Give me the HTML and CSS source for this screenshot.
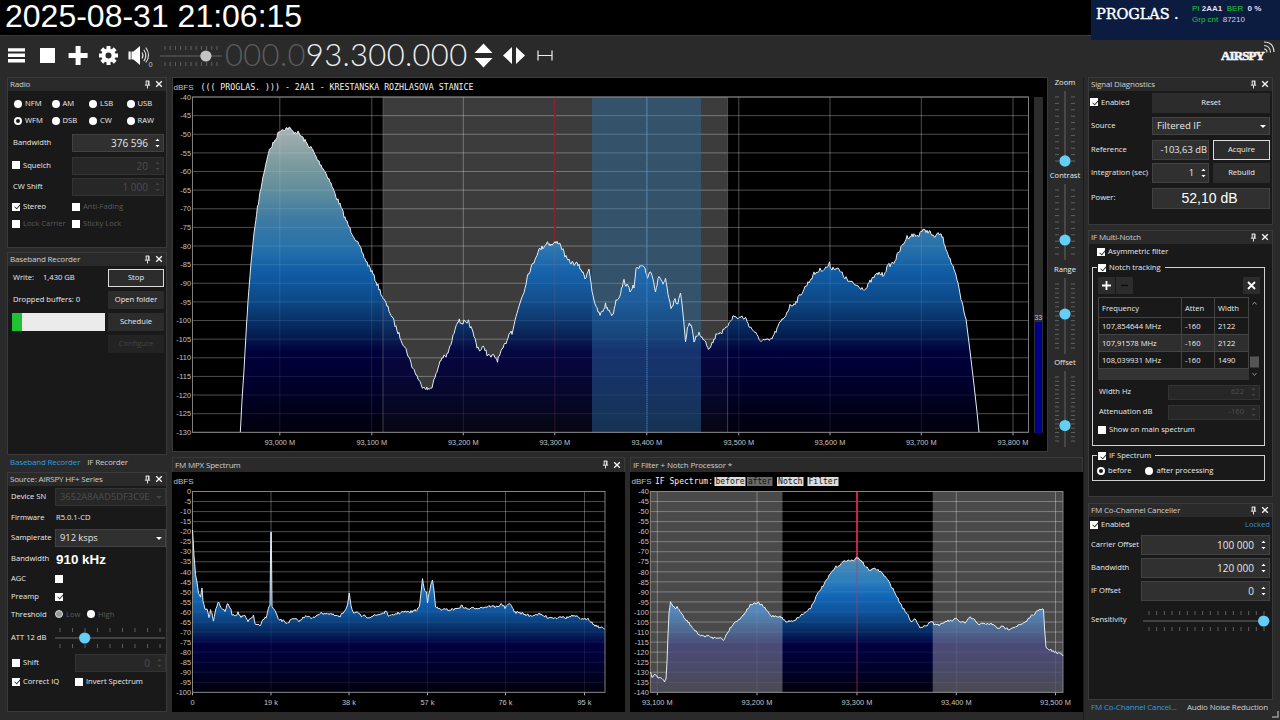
FILE: index.html
```html
<!DOCTYPE html>
<html lang="en">
<head>
    <meta charset="UTF-8">
    <meta name="viewport" content="width=device-width, initial-scale=1.0">
    <title>SDR receiver</title>
    <link rel="stylesheet" href="styles.css">
</head>
<body>
    <!-- shared icons -->
    <svg class="defs" width="0" height="0">
        <symbol id="pin" viewBox="0 0 8 10"><path d="M2 1h4M2.5 1v4.500M5 1v4.500M5.700 1v4.500M1 5.800h6M4 6v3.500" fill="none" stroke="#eee" stroke-width="1.100"/></symbol>
        <symbol id="close" viewBox="0 0 8 8"><path d="M1.200 1.200l5.600 5.600M6.800 1.200l-5.600 5.600" stroke="#f2f2f2" stroke-width="1.400"/></symbol>
        <symbol id="spin" viewBox="0 0 6 12"><path d="M0.500 3.500L3 0.800l2.500 2.700zM0.500 8.500L3 11.200l2.500-2.700z" fill="currentColor"/></symbol>
    </svg>

    <header class="clock">2025-08-31 21:06:15</header>
    <div class="rds">
        <span class="station">PROGLAS .</span>
        <div class="rds-info">
            <p><i>PI</i> <b>2AA1</b> &nbsp;<i>BER</i> &nbsp;<b>0 %</b></p>
            <p><i>Grp cnt</i> &nbsp;<em>87210</em></p>
        </div>
    </div>

    <div class="toolbar">
        <svg class="tools" width="160" height="40" viewBox="0 36 160 40" fill="#fff">
            <path d="M8 48.200h17v3.400H8zM8 53.600h17v3.400H8zM8 59h17v3.400H8z"/>
            <path d="M40 48h15v15H40z"/>
            <path d="M75.600 46h5v7h7v5h-7v7h-5v-7h-7v-5h7z"/>
            <g transform="translate(108.500 55.500)">
                <circle r="5" fill="none" stroke="#fff" stroke-width="4"/>
                <path id="tooth" d="M-2-9.500h4v4h-4z"/>
                <use href="#tooth" transform="rotate(45)"/><use href="#tooth" transform="rotate(90)"/>
                <use href="#tooth" transform="rotate(135)"/><use href="#tooth" transform="rotate(180)"/>
                <use href="#tooth" transform="rotate(225)"/><use href="#tooth" transform="rotate(270)"/>
                <use href="#tooth" transform="rotate(315)"/>
            </g>
            <path d="M128.500 51.500h2.200v8h-2.200zM131.500 51.500h2L140 46v19l-6.500-5.500h-2z"/>
            <path d="M142 52.500q2 3 0 6M143.800 49.800q4 5.700 0 11.400M145.800 47.500q5.500 8 0 15" fill="none" stroke="#ddd" stroke-width="1.100"/>
            <text x="148.500" y="66.500" font-size="7">0</text>
        </svg>
        <svg class="slider" data-dir="h" data-size="62x26" data-ticks="11" data-pos="0.740" data-knob="#c4c4c4" data-pad="5"></svg>
        <div class="freq">
            <span class="off">000<s>.</s>0</span>93<s>.</s>300<s>.</s>000
        </div>
        <svg class="steps" width="90" height="40" viewBox="470 36 90 40" fill="#fff">
            <path d="M483.500 43.500l9 9.500h-18zM483.500 67.500l9-9.500h-18z"/>
            <path d="M503 55.500l9-8.500v17zM525 55.500l-9-8.500v17z"/>
            <path d="M538 50.500v10M552 50.500v10M538 55.500h14" stroke="#eee" stroke-width="1.200"/>
        </svg>
        <div class="logo">
            <span>AIRSPY</span>
            <svg width="12" height="12" viewBox="0 0 12 12" fill="none" stroke="#ddd" stroke-width="1.200"><path d="M1 8q3 0 3 3.500M1 4.500q6 0 6.500 7M1 1q9.500 0 10 10"/></svg>
        </div>
    </div>

    <main>
        <aside class="left">
            <section class="panel radio">
                <h2>Radio<svg class="pin"><use href="#pin"/></svg><svg class="close"><use href="#close"/></svg></h2>
                <div class="body">
                    <div class="modes"><label><i class="rd"></i>NFM</label><label><i class="rd"></i>AM</label><label><i class="rd"></i>LSB</label><label><i class="rd"></i>USB</label></div>
                    <div class="modes"><label><i class="rd on"></i>WFM</label><label><i class="rd"></i>DSB</label><label><i class="rd"></i>CW</label><label><i class="rd"></i>RAW</label></div>
                    <div class="row first"><span>Bandwidth</span><div class="field">376 596<svg><use href="#spin"/></svg></div></div>
                    <div class="row"><label><i class="ck"></i>Squelch</label><div class="field dis">20<svg><use href="#spin"/></svg></div></div>
                    <div class="row"><span>CW Shift</span><div class="field dis">1 000<svg><use href="#spin"/></svg></div></div>
                    <div class="pair"><label><i class="ck on"></i>Stereo</label><label class="dim"><i class="ck"></i>Anti-Fading</label></div>
                    <div class="pair"><label class="dim"><i class="ck"></i>Lock Carrier</label><label class="dim"><i class="ck"></i>Sticky Lock</label></div>
                </div>
            </section>

            <section class="panel recorder">
                <h2>Baseband Recorder<svg class="pin"><use href="#pin"/></svg><svg class="close"><use href="#close"/></svg></h2>
                <div class="body">
                    <div class="row"><span class="w">Write:</span><span>1,430 GB</span><button class="focus">Stop</button></div>
                    <div class="row"><span>Dropped buffers: 0</span><button>Open folder</button></div>
                    <div class="row"><div class="progress"><div></div></div><button>Schedule</button></div>
                    <div class="row"><button class="off">Configure</button></div>
                </div>
            </section>
            <nav class="tabs"><a class="active">Baseband Recorder</a><a>IF Recorder</a></nav>

            <section class="panel source">
                <h2>Source: AIRSPY HF+ Series<svg class="pin"><use href="#pin"/></svg><svg class="close"><use href="#close"/></svg></h2>
                <div class="body">
                    <div class="row"><span>Device SN</span><div class="combo dis">3652A8AAD5DF3C9E<b></b></div></div>
                    <div class="row"><span>Firmware</span><span class="fw">R5.0.1-CD</span></div>
                    <div class="row"><span>Samplerate</span><div class="combo">912 ksps<b></b></div></div>
                    <div class="row"><span>Bandwidth</span><strong>910 kHz</strong></div>
                    <div class="row"><span>AGC</span><i class="ck"></i></div>
                    <div class="row"><span>Preamp</span><i class="ck on"></i></div>
                    <div class="row"><span>Threshold</span><label class="dim low"><i class="rd half"></i>Low</label><label class="dim"><i class="rd"></i>High</label></div>
                    <div class="row"><span>ATT 12 dB</span><svg class="slider" data-dir="h" data-size="110x24" data-ticks="9" data-pos="0.270" data-knob="#63cff6" data-pad="5"></svg></div>
                    <div class="row shift"><label><i class="ck"></i>Shift</label><div class="field dis">0<svg><use href="#spin"/></svg></div></div>
                    <div class="row shift"><label><i class="ck on"></i>Correct IQ</label><label><i class="ck"></i>Invert Spectrum</label></div>
                </div>
            </section>
        </aside>

        <div class="center">
            <div class="upper">
                <svg id="main-chart" width="876" height="375" viewBox="172 77 876 375"></svg>
                <div class="vsliders">
                    <span>Zoom</span><svg class="slider" data-dir="v" data-size="26x76" data-ticks="11" data-pos="0.920" data-knob="#63cff6" data-pad="6"></svg>
                    <span>Contrast</span><svg class="slider" data-dir="v" data-size="26x76" data-ticks="11" data-pos="0.737" data-knob="#63cff6" data-pad="6"></svg>
                    <span>Range</span><svg class="slider" data-dir="v" data-size="26x76" data-ticks="15" data-pos="0.474" data-knob="#63cff6" data-pad="6"></svg>
                    <span>Offset</span><svg class="slider" data-dir="v" data-size="26x76" data-ticks="16" data-pos="0.717" data-knob="#63cff6" data-pad="6"></svg>
                </div>
            </div>
            <div class="lower">
                <section class="panel">
                    <h2>FM MPX Spectrum<svg class="pin"><use href="#pin"/></svg><svg class="close"><use href="#close"/></svg></h2>
                    <svg id="mpx-chart" width="453" height="240" viewBox="172 472 453 240"></svg>
                </section>
                <section class="panel">
                    <h2>IF Filter + Notch Processor *</h2>
                    <svg id="if-chart" width="453" height="240" viewBox="630 472 453 240"></svg>
                </section>
            </div>
        </div>

        <aside class="right">
            <section class="panel diag">
                <h2>Signal Diagnostics<svg class="pin"><use href="#pin"/></svg><svg class="close"><use href="#close"/></svg></h2>
                <div class="body">
                    <div class="row"><label><i class="ck on"></i>Enabled</label><button class="wide">Reset</button></div>
                    <div class="row"><span>Source</span><div class="combo">Filtered IF<b></b></div></div>
                    <div class="row"><span>Reference</span><div class="field half">-103,63 dB</div><button class="focus">Acquire</button></div>
                    <div class="row"><span>Integration (sec)</span><div class="field half num">1<svg><use href="#spin"/></svg></div><button>Rebuild</button></div>
                    <div class="row"><span>Power:</span><div class="power">52,10 dB</div></div>
                </div>
            </section>

            <section class="panel notch">
                <h2>IF Multi-Notch<svg class="pin"><use href="#pin"/></svg><svg class="close"><use href="#close"/></svg></h2>
                <div class="body">
                    <label class="asym"><i class="ck on"></i>Asymmetric filter</label>
                    <div class="group tracking">
                        <label class="legend"><i class="ck on"></i>Notch tracking</label>
                        <div class="buttons">
                            <svg width="17" height="17"><path d="M4 8.500h9M8.500 4v9" stroke="#fff" stroke-width="1.800"/></svg>
                            <svg width="17" height="17"><path d="M5 8.500h7" stroke="#111" stroke-width="1.500"/></svg>
                            <svg width="17" height="17"><path d="M5 5l7 7M12 5l-7 7" stroke="#fff" stroke-width="1.800"/></svg>
                        </div>
                        <div class="list">
                            <table>
                                <tr><th>Frequency</th><th>Atten</th><th>Width</th></tr>
                                <tr><td>107,854644 MHz</td><td>-160</td><td>2122</td></tr>
                                <tr class="alt"><td>107,91578 MHz</td><td>-160</td><td>2122</td></tr>
                                <tr><td>108,039931 MHz</td><td>-160</td><td>1490</td></tr>
                            </table>
                            <svg width="11" height="82" fill="none" stroke="#888" stroke-width="1"><path d="M3.500 7.500l2-2.500 2 2.500M3.500 76l2 2.500 2-2.500"/><path d="M1 59.500h9v11H1z" fill="#555" stroke="none"/></svg>
                        </div>
                        <div class="row"><span>Width Hz</span><div class="field dis small">622<svg><use href="#spin"/></svg></div></div>
                        <div class="row"><span>Attenuation dB</span><div class="field dis small">-160<svg><use href="#spin"/></svg></div></div>
                        <label class="show"><i class="ck"></i>Show on main spectrum</label>
                    </div>
                    <div class="group ifs">
                        <label class="legend"><i class="ck on"></i>IF Spectrum</label>
                        <div class="radios"><label><i class="rd on"></i>before</label><label><i class="rd"></i>after processing</label></div>
                    </div>
                </div>
            </section>

            <section class="panel cancel">
                <h2>FM Co-Channel Canceller<svg class="pin"><use href="#pin"/></svg><svg class="close"><use href="#close"/></svg></h2>
                <div class="body">
                    <div class="row"><label><i class="ck on"></i>Enabled</label><span class="locked">Locked</span></div>
                    <div class="row"><span>Carrier Offset</span><div class="field">100 000<svg><use href="#spin"/></svg></div></div>
                    <div class="row"><span>Bandwidth</span><div class="field">120 000<svg><use href="#spin"/></svg></div></div>
                    <div class="row"><span>IF Offset</span><div class="field">0<svg><use href="#spin"/></svg></div></div>
                    <div class="row"><span>Sensitivity</span><svg class="slider" data-dir="h" data-size="127x24" data-ticks="16" data-pos="0.950" data-knob="#63cff6" data-pad="6"></svg></div>
                </div>
            </section>
            <nav class="tabs"><a class="active">FM Co-Channel Cancel...</a><a>Audio Noise Reduction</a></nav>
            <svg class="grip" width="7" height="7"><path d="M6 0v6H0" fill="none" stroke="#999" stroke-width="1.500"/></svg>
        </aside>
    </main>
    <script src="charts.js"></script>
</body>
</html>
```

FILE: styles.css
```css
* {
    box-sizing: border-box;
    margin: 0;
    padding: 0;
}

body {
    width: 1280px;
    height: 720px;
    overflow: hidden;
    background: #2a2a2a;
    color: #ececec;
    font-family: "Open Sans", "Noto Sans", sans-serif;
    font-size: 7.6px;
    font-weight: 500;
    line-height: 1.2;
    white-space: nowrap;
}

svg {
    display: block;
    flex: none;
}

.defs {
    position: absolute;
}

.clock {
    height: 35px;
    padding-left: 5px;
    background: #000;
    color: #fff;
    font: 32px/32px "Liberation Sans", Arial, sans-serif;
}

/* station info lying over the top right corner */
.rds {
    position: absolute;
    top: 0;
    right: 0;
    width: 189px;
    height: 40px;
    display: flex;
    background: #0b1c40;
    padding-left: 5px;
}
.station {
    width: 96px;
    color: #fff;
    font: 14.5px/29px "DejaVu Serif", serif;
    letter-spacing: -0.1px;
    -webkit-text-stroke: 0.4px #fff;
}
.rds-info {
    padding-top: 3px;
    font: 8px/11px "Liberation Sans", Arial, sans-serif;
    color: #d9c8f0;
}
.rds-info i {
    font-style: normal;
    color: #22c53c;
}
.rds-info b {
    color: #e8dcf8;
}
.rds-info em {
    font-style: normal;
}

.toolbar {
    height: 42px;
    display: flex;
    align-items: center;
    border-top: 1px solid #383838;
    padding-bottom: 2px;
}
.freq {
    width: 243px;
    margin-left: 3px;
    display: flex;
    font: 300 31px/36px Lato, sans-serif;
    letter-spacing: 0.33px;
    padding-bottom: 3px;
    color: #f0f0f0;
}
.freq s {
    text-decoration: none;
}
.freq .off {
    display: flex;
    color: #5c5c5c;
}
.steps {
    margin-left: 2px;
}
.logo {
    display: flex;
    margin-left: auto;
    margin-right: 5px;
    color: #f4f4f4;
    font: bold 13px/13px "Liberation Serif", serif;
    letter-spacing: -0.9px;
    -webkit-text-stroke: 0.6px #f4f4f4;
}
.logo svg {
    margin: -8px 0 0 -3px;
}
.logo span {
    width: 45px;
}

main {
    display: flex;
    height: 643px;
}
.left {
    width: 172px;
    padding-left: 7px;
}
.center {
    width: 911px;
}
.right {
    position: relative;
    width: 197px;
    padding-left: 4px;
    border-left: 1px solid #1b1b1b;
}

.panel {
    border: 1px solid #3a3a3a;
    background: #191919;
}
.left .panel {
    width: 160px;
}
.right .panel {
    width: 185px;
}
.panel h2 {
    height: 13px;
    display: flex;
    align-items: center;
    padding: 0 3px 1px 2px;
    background: #2a2a2a;
    color: #cfcfcf;
    font-size: 8px;
    font-weight: 400;
    letter-spacing: -0.17px;
}
.panel h2 .pin {
    width: 7px;
    height: 9px;
    margin-left: auto;
    margin-right: 4px;
}
.panel h2 .close {
    width: 8px;
    height: 8px;
}

.row,
label {
    display: flex;
    align-items: center;
}
.rd {
    width: 8px;
    height: 8px;
    margin-right: 3px;
    border-radius: 50%;
    background: #fff;
    flex: none;
}
.rd.on {
    border: 2px solid #fff;
    background: #191919;
}
.rd.half {
    background: #999;
    border: 1.5px solid #ddd;
}
.ck {
    width: 8px;
    height: 8px;
    margin-right: 3px;
    background: #fff;
    flex: none;
}
.ck.on::after {
    content: "";
    display: block;
    width: 6px;
    height: 3px;
    margin: 1.5px 0 0 1.5px;
    border-left: 1px solid #222;
    border-bottom: 1px solid #222;
    transform: rotate(-48deg) scale(0.85);
}
.dim {
    color: #5a5a5a;
}

.field,
.combo,
.power {
    display: flex;
    align-items: center;
    justify-content: flex-end;
    height: 18px;
    margin-left: auto;
    padding-right: 3px;
    border: 1px solid #424242;
    background: #303030;
    color: #e6e6e6;
    font-size: 10px;
    font-weight: 400;
}
.field svg {
    width: 5px;
    height: 12px;
    margin-left: 7px;
    color: #fff;
}
.field.dis,
.combo.dis {
    background: #272727;
    border-color: #333;
    color: #4e4e4e;
}
.field.dis svg {
    color: #444;
}
.combo {
    justify-content: flex-start;
    padding-left: 4px;
}
.combo b {
    margin-left: auto;
    border: 3px solid transparent;
    border-top-color: #fff;
    border-bottom-width: 0;
}
.combo.dis b {
    border-top-color: #444;
}
button {
    width: 56px;
    height: 18px;
    margin-left: auto;
    border: 1px solid #2c2c2c;
    background: #2c2c2c;
    color: #ececec;
    font: inherit;
}
button.focus {
    border-color: #dcdcdc;
}
button.off {
    background: #232323;
    border-color: #232323;
    color: #444;
}

/* left column */
.radio {
    height: 171px;
    margin-bottom: 4px;
}
.radio .body {
    padding: 4px 4px 0 5px;
    display: grid;
    grid-template-rows: 17px 17px 26px 21px 22px 17px 17px;
}
.modes {
    display: grid;
    grid-template-columns: repeat(4, 37.5px);
    padding-left: 1px;
}
.radio .first {
    padding-top: 2px;
}
.radio .field {
    width: 92px;
}
.pair {
    display: grid;
    grid-template-columns: 60px 80px;
    margin-left: -1px;
}
.radio .row label {
    margin-left: -1px;
}
.recorder {
    height: 203px;
}
.recorder .body {
    padding-top: 1px;
}
.recorder .row {
    height: 22px;
    padding: 0 2px 0 5px;
}
.recorder .w {
    width: 30px;
}
.progress {
    width: 93px;
    height: 18px;
    margin-left: -1px;
    background: #ebebeb;
}
.progress div {
    width: 10px;
    height: 18px;
    background: #1fc235;
}
.tabs {
    height: 14px;
    display: flex;
    align-items: center;
    padding-bottom: 1px;
    font-size: 8px;
    font-weight: 400;
    letter-spacing: -0.17px;
    color: #d0d0d0;
}
.tabs a {
    padding: 0 4px 0 3px;
}
.tabs .active {
    color: #2f9de0;
}
.source {
    height: 240px;
    margin-top: 3px;
}
.source .body {
    display: grid;
    grid-template-rows: 20px 21px 20px 22px 17px 19px 17px 30px 20px 18px;
    padding: 1px 2px 0 3px;
}
.source .row > span:first-child {
    width: 44px;
}
.source .row > .slider {
    margin-left: 0;
}
.source .fw {
    padding-left: 1px;
}
.source .combo {
    width: 111px;
    font-size: 9.3px;
}
.source strong {
    padding-left: 1px;
    font: bold 13.4px "Liberation Sans", sans-serif;
    color: #fff;
}
.source .low {
    width: 32px;
}
.source .shift label:first-child {
    width: 64px;
    padding-left: 1px;
}
.source .shift .field {
    width: 91px;
}

/* center */
.upper {
    display: flex;
    height: 380px;
}
.upper > svg {
    outline: 1px solid #3a3a3a;
    outline-offset: -1px;
}
.vsliders {
    width: 34px;
    margin-top: -1px;
    display: flex;
    flex-direction: column;
    align-items: center;
}
.vsliders span {
    height: 12px;
    line-height: 12px;
}
.vsliders .slider {
    margin: 3px 0 2.4px;
}
.lower {
    display: flex;
    gap: 5px;
}
.lower .panel {
    width: 453px;
    height: 255px;
    background: #000;
}
.lower h2 {
    height: 14px;
}
.lower .panel > svg {
    margin-left: -1px;
    width: 453px;
}
svg text {
    font-family: "Liberation Sans", Arial, sans-serif;
    font-size: 7.4px;
    fill: #c4c4c4;
}
svg text.mono {
    font-family: "DejaVu Sans Mono", monospace;
    font-size: 8px;
    fill: #f2f2f2;
}
svg text.dark {
    fill: #111;
}

/* right column */
.diag {
    height: 148px;
    margin-bottom: 5px;
}
.diag .body {
    display: grid;
    grid-template-rows: 23px 24px 23px 24px 26px;
    padding: 0 2px 0 1px;
}
.diag .combo,
.diag .wide,
.diag .power {
    width: 118px;
}
.diag .combo {
    font-size: 9.6px;
}
.diag .wide {
    height: 20px;
}
.diag .half {
    width: 57px;
    height: 20px;
    margin-right: 4px;
    padding-right: 1px;
    font-size: 9.4px;
}
.diag .half + button {
    width: 57px;
    height: 20px;
    margin-left: 0;
}
.diag .num {
    padding-right: 2px;
}
.diag .power {
    height: 21px;
    justify-content: center;
    color: #fff;
    font: 14px "Liberation Sans", Arial, sans-serif;
}
.notch {
    height: 267px;
    margin-bottom: 6px;
}
.notch .body {
    padding: 3px 7px 0 3px;
}
.asym {
    height: 10px;
    padding-left: 5px;
}
.group {
    border: 1px solid #d0d0d0;
    padding: 0 4px 0 5px;
}
.legend {
    width: fit-content;
    height: 10px;
    margin: -5px 0 0 -1px;
    padding: 0 4px 0 1px;
    background: #191919;
}
.tracking {
    height: 179px;
    margin-top: 10px;
}
.buttons {
    display: flex;
    gap: 1px;
    margin-top: 4px;
}
.buttons svg {
    background: #2c2c2c;
}
.buttons svg:last-child {
    margin-left: auto;
}
.list {
    display: flex;
    height: 82px;
    margin: 3px 0 3px;
}
table {
    width: 151px;
    align-self: flex-start;
    height: 71px;
    border-collapse: collapse;
    table-layout: fixed;
    box-shadow: 0 11px 0 #333;
}
th,
td {
    height: 17px;
    padding-left: 3px;
    border: 1px solid #444;
    text-align: left;
    font-weight: 500;
    line-height: 8px;
}
th {
    height: 20px;
}
th:first-child {
    width: 83px;
}
th:nth-child(2) {
    width: 33px;
}
.alt {
    background: #2e2e2e;
}
.tracking .row {
    height: 20px;
    padding-left: 1px;
}
.tracking .field {
    width: 92px;
    height: 15px;
    font-size: 7.6px;
}
.show {
    height: 16px;
}
.ifs {
    height: 26px;
    margin-top: 9px;
}
.radios {
    display: flex;
    height: 20px;
    gap: 14px;
    margin-left: -1px;
}
.cancel {
    height: 197px;
}
.cancel .body {
    display: grid;
    grid-template-rows: 16px 23px 23px 23px 36px;
    padding: 0 2px 0 1px;
}
.cancel .field {
    width: 129px;
    height: 20px;
}
.cancel .slider {
    margin: 1px 0 0 auto;
}
.locked {
    margin-left: auto;
    color: #3d8fd4;
}
.diag .row > span:first-child,
.cancel .row > span:first-child {
    padding-left: 1px;
}
.right .tabs {
    justify-content: space-between;
    margin-right: 8px;
}
.grip {
    position: absolute;
    right: 1px;
    bottom: 2px;
}
```

FILE: charts.js
```js
const NS = 'http://www.w3.org/2000/svg';

function add(parent, tag, attrs, text) {
    const el = document.createElementNS(NS, tag);
    for (const k in attrs) el.setAttribute(k, attrs[k]);
    if (text !== undefined) el.textContent = text;
    parent.appendChild(el);
    return el;
}

// repeatable noise so the trace always looks the same
let seed = 7;
function rnd() {
    seed = (seed * 16807) % 2147483647;
    return seed / 2147483647 - 0.5;
}

function trace(str, noise) {
    const p = str.trim().split(/\s+/).map(s => s.split(',').map(Number));
    const out = [];
    for (let i = 0; i < p.length - 1; i++) {
        const [x0, y0] = p[i], [x1, y1] = p[i + 1];
        const steep = Math.abs(y1 - y0) > 6 * (x1 - x0);
        const n = Math.max(1, Math.round(x1 - x0));
        for (let k = 0; k < n; k++) {
            const j = steep || i === 0 ? 0 : rnd() * noise;
            out.push((x0 + (x1 - x0) * k / n).toFixed(1) + ',' + (y0 + (y1 - y0) * k / n + j).toFixed(1));
        }
    }
    out.push(p[p.length - 1].join(','));
    return out;
}

const STOPS = [
    [0, '#dde3e3'], [0.1, '#b5c2c4'], [0.2, '#8aabae'], [0.28, '#6a9dae'], [0.36, '#4688b4'],
    [0.45, '#2b7dbd'], [0.52, '#1267b7'], [0.6, '#0f539a'], [0.66, '#093a76'], [0.72, '#041c55'],
    [0.76, '#000042'], [0.85, '#000034'], [1, '#00000e']
];

function chart(id, o) {
    const svg = document.getElementById(id);
    const vb = svg.viewBox.baseVal;
    add(svg, 'rect', { x: vb.x, y: vb.y, width: vb.width, height: vb.height, fill: '#000' });
    const g = add(svg, 'linearGradient', { id: id + '-g', gradientUnits: 'userSpaceOnUse', x1: 0, x2: 0, y1: o.top, y2: o.bottom });
    STOPS.forEach(s => add(g, 'stop', { offset: s[0], 'stop-color': s[1] }));

    const band = b => add(svg, 'rect', { x: b[0], y: o.top, width: b[1] - b[0], height: o.bottom - o.top, fill: b[2] });
    (o.under || []).forEach(band);
    const steps = (o.max - o.min) / 5;
    let lines = '';
    for (let i = 0; i <= steps; i++) {
        const y = o.top + (o.bottom - o.top) * i / steps;
        lines += `M${o.left} ${y}H${o.right}`;
        add(svg, 'text', { x: o.left - 1.5, y: y + 2.7, 'text-anchor': 'end' }, o.max - i * 5);
    }
    o.labels.forEach(l => {
        lines += `M${l[0]} ${o.top}V${o.bottom}`;
        add(svg, 'path', { d: `M${l[0]} ${o.bottom}v3`, stroke: '#aaa' });
        add(svg, 'text', { x: l[0], y: o.bottom + 12.5, 'text-anchor': 'middle' }, l[1]);
    });
    add(svg, 'path', { d: lines, stroke: '#fff', 'stroke-opacity': 0.25 });
    if (o.tuned) add(svg, 'path', { d: `M${o.tuned} ${o.top}V${o.bottom}`, stroke: o.tunedColor, 'stroke-width': 2 });

    const pts = trace(o.points, o.noise);
    const first = pts[0].split(',')[0], last = pts[pts.length - 1].split(',')[0];
    add(svg, 'path', { d: `M${first},${o.bottom}L${pts.join('L')}L${last},${o.bottom}Z`, fill: `url(#${id}-g)`, 'fill-opacity': o.alpha });
    add(svg, 'path', { d: lines, stroke: '#fff', 'stroke-opacity': 0.07 });
    (o.over || []).forEach(band);
    if (o.inner) add(svg, 'path', { d: `M${o.tuned} ${o.top}V${o.bottom}`, stroke: '#c0205a', 'stroke-opacity': o.inner, 'stroke-width': 2 });
    add(svg, 'rect', { x: o.left, y: o.top, width: o.right - o.left, height: o.bottom - o.top, fill: 'none', stroke: '#8c8c8c', 'stroke-width': 0.9 });
    add(svg, 'path', { d: 'M' + pts.join('L'), fill: 'none', stroke: '#e3ecf4', 'stroke-width': 1, 'stroke-linejoin': 'round' });
    add(svg, 'text', { x: vb.x + 1.5, y: o.top - o.unitGap }, 'dBFS').style.fontSize = '8px';
    return svg;
}

const main = chart('main-chart', {
    left: 192.5, right: 1028.5, top: 97, bottom: 432.3, max: -40, min: -130, noise: 4.5, alpha: 0.9, unitGap: 7.5,
    labels: [[279.8, '93,000 M'], [371.8, '93,100 M'], [463.3, '93,200 M'], [554.8, '93,300 M'], [646.8, '93,400 M'],
        [738.8, '93,500 M'], [830, '93,600 M'], [921.3, '93,700 M'], [1013, '93,800 M']],
    under: [[383, 727.6, '#3c3c3c']],
    over: [[592, 701, 'rgba(45, 115, 175, 0.42)']],
    tuned: 555, tunedColor: '#7a1a28', inner: 0.06,
    points: `240.3,432 242,400 244,370 246.5,325 248,301 251,263 254,233 257.5,208 261,188 264,172 268.5,152 272,146 276,138
    280,130 284,129 289,128 293,132 297,132 302,137 307,144 312,149 317,159 323,168 329,179 335,194 340,205 345,218 350,229
    355,238 360,248 366,261 372,272 378,286 383,298 388,308 392,317 397,330 402,341 407,352 412,366 417,376 421,385 425,387
    428.5,390 432,386 436,375 440,361 443,357 446,357 449,350 452,341 456,324 458.5,320 461,323 464,322 467,325 468.5,322
    471,328 474,336 477,346 480.5,351 484,346 487,354 490,357 494,356 497.5,360 501,353 506,342 511,329 512,333 516,317
    520,302 524,291 528,274 533,264 538,251 543,247 547.5,242 551,245 555,243 559,242 562,248 567,260 572,263 577,264
    581,269 585,278 589,269 592,290 596,308 600,315 603,311 605.5,304 607,309 610,311 612.5,316 616,300 619,297 621.5,289
    624,281 627,286 630,290 633,286 634,288 636,270 639,268 641.5,266 645,270 647.5,277 650,271 653,277 655.5,291 658,280
    660,277 663,284 665.5,280 668,295 671,308 673,308 675,297 677,306 680.5,293 682,304 685.5,340 688.5,324 691,325 694,341
    697,335 699,333 701,338 704,338 708.5,348 713,342 717,333 722,332 726,329 730,320 734,316 737,318 742,317 746,319
    750,327 755,332 759,340 763,340 767,341 771,340 775,333 780,323 785,316 790,306 796,302 802,292 808,283 814,274
    820,270 826,268 829.5,264 831,268 837,268 843,275 848,281 854,284 860,287 866,289 870,282 875,276 879,273 883,275
    888,266 894,262 900,250 907,237 913,235 918,236 921,231 929,231 933,237 939,234 942,236 946,248 951,262 957,280
    961,299 966,319 970,351 974,385 977,412 979,432`
});
// notch center, signal meter and station name
add(main, 'path', { d: 'M647 97V432', stroke: '#3d8fd0', 'stroke-opacity': 0.8, 'stroke-dasharray': '1.5 0.7' });
add(main, 'path', { d: 'M383 97V432M727.6 97V432', stroke: '#777', 'stroke-opacity': 0.5 });
add(main, 'rect', { x: 1034, y: 97, width: 9, height: 336, fill: '#2c2c2c' });
add(main, 'rect', { x: 1035, y: 322, width: 7, height: 111, fill: '#00008c' });
add(main, 'text', { x: 1038.3, y: 320, 'text-anchor': 'middle' }, '33');
add(main, 'text', { x: 200.5, y: 89.5, class: 'mono', textLength: 273, lengthAdjust: 'spacingAndGlyphs' },
    '((( PROGLAS. ))) - 2AA1 - KRESTANSKA ROZHLASOVA STANICE');

chart('mpx-chart', {
    left: 192.5, right: 605, top: 491.5, bottom: 692.3, max: 0, min: -100, noise: 2.6, alpha: 1, unitGap: 7.5,
    labels: [[192.5, '0'], [271, '19 k'], [349, '38 k'], [427.5, '57 k'], [505.5, '76 k'], [584.5, '95 k']],
    points: `192.5,530 194,556 195.5,574 197,582 198.5,594 200.5,597 202,588 203,601 205,609 207,608 209,618 210.5,609
    212,614 213.5,620 216,608 218.5,602 221,607 225,612 227,604 230,607 232,614 235,615 238,613 241,617 245,616 248,622
    251,618 253.5,615 255,625 258,624 260,627 263,620 266,617 267.5,612 269,607 270,605 270.8,532 271.3,532 272,607
    275,611 278,619 283,621 287,623 293,619 300,621 306,615 312,619 318,614 325,613 333,615 340,617 345,610 347.5,605
    349.2,593 351,605 353,612 357,613 361,616 369,617 377,615 383,613 387,612 389,617 395,614 403,612 410,612 417,610
    419.5,606 422.5,579 424,588 426.5,592 427.5,603 429,592 432.5,580 434,591 435.5,607 439,609 446,610 456,609 462,606
    467,609 476,608 485,607 490,606 496,607 502,604 505,608 510.5,603 514,612 521,613 530,616 538,614 547,617 556,618
    560,616 565,618 573,616 580,618 583,620 588,618 593,624 599,627 604.7,629`
});

const ifc = chart('if-chart', {
    left: 650.3, right: 1063, top: 491.5, bottom: 692.3, max: -40, min: -140, noise: 2.4, alpha: 1, unitGap: 7.5,
    labels: [[657.3, '93,100 M'], [757, '93,200 M'], [857, '93,300 M'], [956.3, '93,400 M'], [1055.5, '93,500 M']],
    over: [[650.3, 782.5, 'rgba(255, 255, 255, 0.29)'], [932.7, 1063, 'rgba(255, 255, 255, 0.29)']],
    tuned: 857, tunedColor: '#c41c36', inner: 0.3,
    points: `650.5,672 652,677 655,674 658,677 661,678 664.5,682 666,679 667,662 668,635 669,613 670.5,602 672,604 675,609
    677,607 680,611 684,618 689,623 695,631 701,636 707,636 714,638 720,637 723.5,641 726,635 731,627 736,621 741,618
    746,611 751,604 755,604 758,603 762,605 767,611 771,616 776,616 781,617 786,622 790,621 795,620 800,616 806,612
    811,607 816,597 820,590 825,583 831,573 836,567 841,564 846,560 850,561 854,560 857,558 861,560 865,566 869,570
    876,569 881,572 887,579 893,589 898,599 903,608 908,615 911,621 915,619 919,627 924,626 928,625 931,620 934,624
    941,625 946,621 951,621 956,619 961,622 966,623 969.5,617 974,620 979,624 985,624 992,624 997,628 1003,627 1008,629
    1014,627 1020,625 1025,623 1030,617 1036,612 1042,609 1043.5,610 1044.5,628 1046,648 1050,650 1056,653 1060,653 1063,656`
});
add(ifc, 'text', { x: 655, y: 484, class: 'mono', textLength: 58, lengthAdjust: 'spacingAndGlyphs' }, 'IF Spectrum:');
[['before', 714.5, 31, '#dcdcdc'], ['after', 747, 25.5, '#6a6a6a'], ['Notch', 777, 26.5, '#dcdcdc'], ['Filter', 807.5, 31, '#dcdcdc']].forEach(t => {
    add(ifc, 'rect', { x: t[1], y: 477, width: t[2], height: 9, fill: t[3] });
    add(ifc, 'text', { x: t[1] + 1, y: 484, class: 'mono dark', textLength: t[2] - 2, lengthAdjust: 'spacingAndGlyphs' }, t[0]);
});

// sliders with tick marks on both sides of the track
document.querySelectorAll('.slider').forEach(svg => {
    const d = svg.dataset;
    const [w, h] = d.size.split('x').map(Number);
    const pad = Number(d.pad), n = Number(d.ticks), pos = Number(d.pos);
    svg.setAttribute('width', w);
    svg.setAttribute('height', h);
    const vert = d.dir === 'v';
    const len = vert ? h : w, mid = (vert ? w : h) / 2;
    for (let i = 0; i < n; i++) {
        const t = pad + (len - 2 * pad) * i / (n - 1);
        const path = vert ? `M${mid - 10} ${t}h4M${mid + 6} ${t}h4` : `M${t} ${mid - 10}v4M${t} ${mid + 6}v4`;
        add(svg, 'path', { d: path, stroke: '#666', 'stroke-width': 0.9 });
    }
    add(svg, 'path', { d: vert ? `M${mid} 0V${len}` : `M0 ${mid}H${len}`, stroke: '#505050', 'stroke-width': 1.6 });
    add(svg, 'circle', { cx: vert ? mid : len * pos, cy: vert ? len * pos : mid, r: 5.6, fill: d.knob });
});
```
